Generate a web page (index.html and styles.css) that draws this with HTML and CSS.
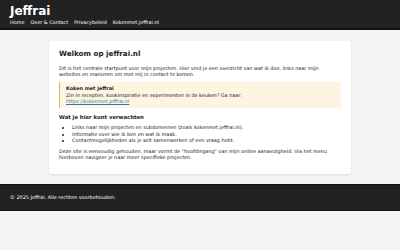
FILE: index.html
```html
<!DOCTYPE html>
<html lang="nl">
<head>
    <meta charset="UTF-8">
    <meta name="viewport" content="width=device-width, initial-scale=1.0">
    <title>Jeffrai</title>
    <link rel="stylesheet" href="styles.css">
</head>
<body>
    <header class="site-header">
        <div class="site-title">Jeffrai</div>
        <nav class="site-nav">
            <a href="#">Home</a>
            <a href="#">Over &amp; Contact</a>
            <a href="#">Privacybeleid</a>
            <a href="#">Kokenmet.jeffrai.nl</a>
        </nav>
    </header>

    <main class="content">
        <h1>Welkom op jeffrai.nl</h1>
        <p>Dit is het centrale startpunt voor mijn projecten. Hier vind je een overzicht van wat ik doe, links naar mijn websites en manieren om met mij in contact te komen.</p>

        <div class="callout">
            <strong>Koken met Jeffrai</strong><br>
            Zin in recepten, kookinspiratie en experimenten in de keuken? Ga naar:<br>
            <a href="#">https://kokenmet.jeffrai.nl</a>
        </div>

        <h2>Wat je hier kunt verwachten</h2>
        <ul>
            <li>Links naar mijn projecten en subdomeinen (zoals kokenmet.jeffrai.nl).</li>
            <li>Informatie over wie ik ben en wat ik maak.</li>
            <li>Contactmogelijkheden als je wilt samenwerken of een vraag hebt.</li>
        </ul>

        <p>Deze site is eenvoudig gehouden, maar vormt de "hoofdingang" van mijn online aanwezigheid. Via het menu hierboven navigeer je naar meer specifieke projecten.</p>
    </main>

    <footer class="site-footer">
        &copy; 2025 Jeffrai. Alle rechten voorbehouden.
    </footer>
</body>
</html>
```

FILE: styles.css
```css
/* Basic page layout */
body {
    margin: 0;
    font-family: "DejaVu Sans", Verdana, sans-serif;
    font-size: 4.9px;
    line-height: 1.3;
    color: #222;
    background-color: #f4f4f4; /* Light grey page */
}

.site-header {
    background-color: #222;
    border-bottom: 2px solid #111;
    color: #fff;
    padding: 5px 10px 3px;
}

.site-title {
    font-size: 12px;
    font-weight: bold;
    line-height: 12px;
}

.site-nav {
    display: flex;
    gap: 6px;
    margin-top: 2px;
}

.site-nav a {
    color: #fff;
    text-decoration: none;
    font-size: 4.9px;
}

.content {
    max-width: 282px;
    margin: 11px auto 10px;
    padding: 8px 10px 10px;
    background-color: #fff;
    border-radius: 3px;
    box-shadow: 0 1px 3px rgba(0, 0, 0, 0.1); /* Subtle shadow */
}

h1 {
    font-size: 7.2px;
    margin: 0 0 6px;
}

h2 {
    font-size: 5.3px;
    margin: 6px 0 4px;
}

p {
    margin: 0 0 4px;
}

.callout {
    background-color: #fdf5e2;
    border-left: 1px solid #e0b94f;
    padding: 3px 6px;
    margin: 5px 0 6px;
}

.callout a {
    color: #2a7ab5;
}

ul {
    margin: 0 0 4px;
    padding-left: 13px;
}

.site-footer {
    background-color: #222;
    border-top: 1px solid #111;
    border-bottom: 1px solid #111;
    color: #fff;
    font-size: 4.9px;
    padding: 9px 10px;
}
```
